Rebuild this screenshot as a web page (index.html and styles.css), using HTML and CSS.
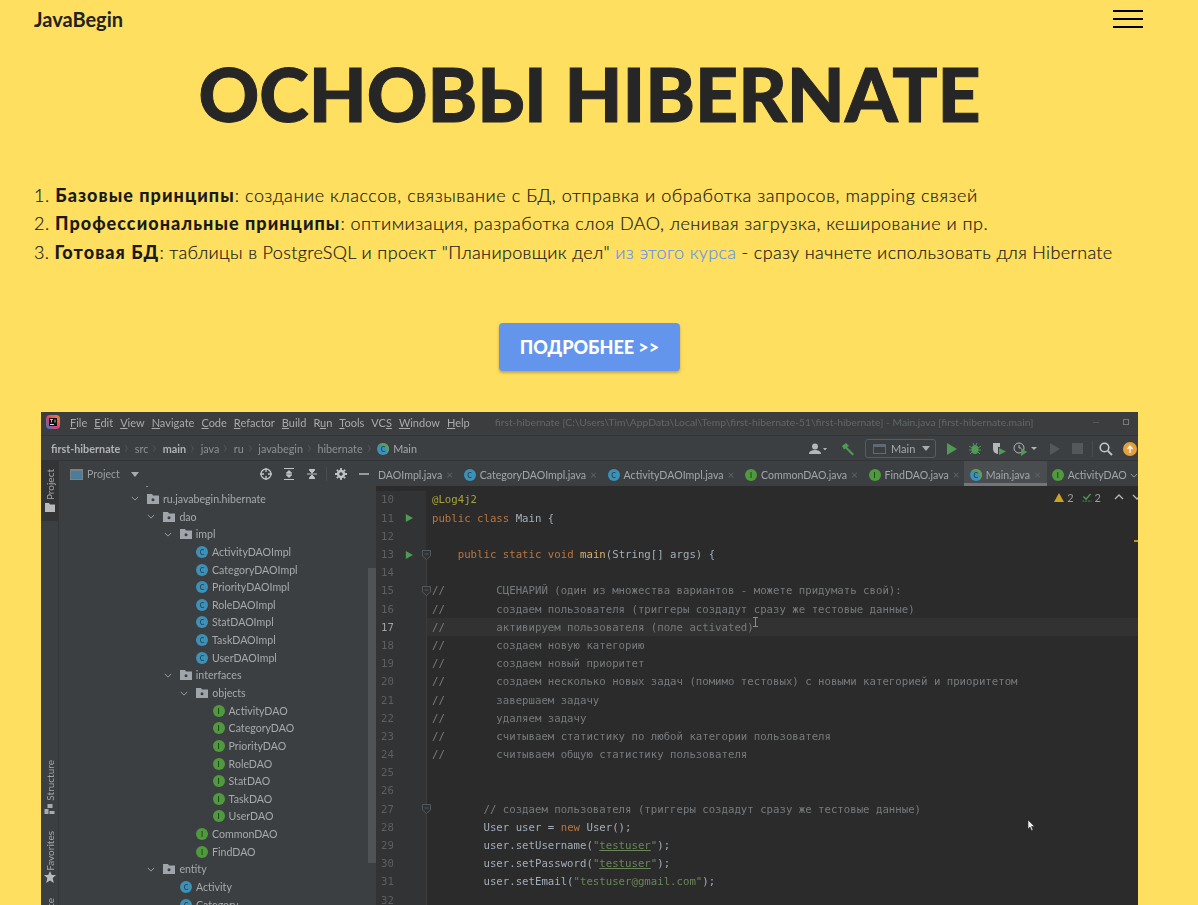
FILE: index.html
```html
<!DOCTYPE html>
<html lang="ru">
<head>
<meta charset="utf-8">
<title>Основы Hibernate</title>
<link rel="stylesheet" href="styles.css">
</head>
<body>
<svg class="defs" width="0" height="0" aria-hidden="true">
  <defs><linearGradient id="ij" x1="0" y1="1" x2="1" y2="0"><stop offset="0" stop-color="#2f7fd0"/><stop offset=".45" stop-color="#d9416b"/><stop offset="1" stop-color="#ee8a3a"/></linearGradient></defs>
  <symbol id="folder" viewBox="0 0 12 10"><path d="M0 0h5l1 1.500h6V10H0z" fill="#a0a5ab"/><circle cx="6" cy="5.800" r="1.500" fill="#3c3f41"/></symbol>
  <symbol id="chev" viewBox="0 0 10 6"><path d="M1 1l4 4 4-4" fill="none" stroke="#a0a3a6" stroke-width="1.200"/></symbol>
  <symbol id="tri" viewBox="0 0 10 10"><path d="M1 0l9 5-9 5z" fill="#4f9a55"/></symbol>
  <symbol id="foldm" viewBox="0 0 9 10"><path d="M.5.500h8v5.500l-4 3.500-4-3.500z" fill="#2f3132" stroke="#55585a"/><path d="M2.500 4h4" stroke="#55585a"/></symbol>
</svg>
<div class="page">
  <header class="topbar">
    <a class="logo">JavaBegin</a>
    <div class="burger"><span></span><span></span><span></span></div>
  </header>
  <h1 class="title">ОСНОВЫ HIBERNATE</h1>
  <div class="intro">
    <p class="l1">1. <b>Базовые принципы</b>: создание классов, связывание с БД, отправка и обработка запросов, mapping связей</p>
    <p class="l2">2. <b>Профессиональные принципы</b>: оптимизация, разработка слоя DAO, ленивая загрузка, кеширование и пр.</p>
    <p class="l3">3. <b>Готовая БД</b>: таблицы в PostgreSQL и проект "Планировщик дел" <a class="link">из этого курса</a> - сразу начнете использовать для Hibernate</p>
  </div>
  <div class="cta"><a class="btn">ПОДРОБНЕЕ &gt;&gt;</a></div>

  <div class="ide">
    <div class="menubar">
      <svg class="appicon" viewBox="0 0 14 14"><rect width="14" height="14" rx="4" fill="url(#ij)"/><rect x="3" y="3" width="8" height="8" fill="#111"/><rect x="4" y="9" width="4" height="1" fill="#ddd"/><path d="M4 4.500h3M5.500 4.500v3M9 4.500v3" stroke="#ddd" stroke-width=".8"/></svg>
      <nav class="menu">
        <span><u>F</u>ile</span><span><u>E</u>dit</span><span><u>V</u>iew</span><span><u>N</u>avigate</span><span><u>C</u>ode</span><span><u>R</u>efactor</span><span><u>B</u>uild</span><span>R<u>u</u>n</span><span><u>T</u>ools</span><span>VC<u>S</u></span><span><u>W</u>indow</span><span><u>H</u>elp</span>
      </nav>
      <span class="wintitle">first-hibernate [C:\Users\Tim\AppData\Local\Temp\first-hibernate-51\first-hibernate] - Main.java [first-hibernate.main]</span>
      <span class="winctl"><i class="min"></i><i class="rest"></i></span>
    </div>
    <div class="navbar">
      <div class="crumbs">
        <b>first-hibernate</b><em></em><span>src</span><em></em><b>main</b><em></em><span>java</span><em></em><span>ru</span><em></em><span>javabegin</span><em></em><span>hibernate</span><em></em>
        <span class="cicon cicon-main">C</span><span class="crumb-main">Main</span>
      </div>
      <div class="tools">
        <svg class="t-user" viewBox="0 0 18 12"><circle cx="6" cy="3.500" r="3" fill="#b4b6b8"/><path d="M0 11c0-3 3-4 6-4s6 1 6 4z" fill="#b4b6b8"/><path d="M14 5h4l-2 2.500z" fill="#b4b6b8"/></svg>
        <svg class="t-ham" viewBox="0 0 14 14"><path d="M1 4l4-3 3 3-2 1 7 7-1.500 1.500-7-7-1.500 1z" fill="#4f9a55"/></svg>
        <div class="runcfg"><i></i><span>Main</span><svg viewBox="0 0 8 5"><path d="M0 0h8L4 5z" fill="#aaa"/></svg></div>
        <svg class="t-play" viewBox="0 0 10 12"><path d="M0 0l10 6-10 6z" fill="#4f9a55"/></svg>
        <svg class="t-bug" viewBox="0 0 12 13"><ellipse cx="6" cy="7.500" rx="3.500" ry="4.500" fill="#4f9a55"/><path d="M0 4l3 2M12 4L9 6M0 8h3M12 8H9M1 12l2-2M11 12l-2-2M4 1l1 2M8 1L7 3" stroke="#4f9a55"/></svg>
        <svg class="t-cov" viewBox="0 0 14 13"><path d="M1 1h5v11a5 5 0 0 1-5-5z" fill="#b4b6b8"/><path d="M6 1h2v4H6z" fill="#b4b6b8"/><path d="M7 6l7 3.500L7 13z" fill="#4f9a55"/></svg>
        <svg class="t-prof" viewBox="0 0 24 14"><circle cx="6" cy="6" r="5" fill="none" stroke="#b4b6b8"/><path d="M6 3v3h2" fill="none" stroke="#b4b6b8"/><path d="M8 6l6 4-6 4z" fill="#4f9a55"/><path d="M18 5h6l-3 3z" fill="#b4b6b8"/></svg>
        <svg class="t-dim" viewBox="0 0 10 12"><path d="M0 0l10 6-10 6z" fill="#55585a"/></svg>
        <i class="t-stop"></i>
        <i class="t-sep"></i>
        <svg class="t-search" viewBox="0 0 14 14"><circle cx="5.500" cy="5.500" r="4.300" fill="none" stroke="#c4c6c8" stroke-width="1.600"/><path d="M8.800 8.800L13 13" stroke="#c4c6c8" stroke-width="1.800"/></svg>
        <svg class="t-upd" viewBox="0 0 14 14"><circle cx="7" cy="7" r="7" fill="#e5a03c"/><path d="M7 11V5M4.500 7L7 4l2.500 3" stroke="#fff" stroke-width="1.300" fill="none"/></svg>
      </div>
    </div>
    <div class="workspace">
      <aside class="strip">
        <div class="strip-active"><span class="vtext">Project</span><svg viewBox="0 0 10 9"><path d="M0 0h4l1 1.500h5V9H0z" fill="#b8babc"/></svg></div>
        <span class="vtext v-structure">Structure</span>
        <svg class="s-struct" viewBox="0 0 10 10"><path d="M0 5h4v5H0zM5 7h5v3H5zM3 0h5v4H3z" fill="#a8aaac"/></svg>
        <span class="vtext v-fav">Favorites</span>
        <svg class="s-star" viewBox="0 0 12 12"><path d="M6 0l1.800 4H12L8.700 7l1.100 5L6 9.400 2.200 12l1.100-5L0 4h4.200z" fill="#b8babc"/></svg>
        <span class="vtext v-web">Persistence</span>
      </aside>
      <section class="project">
        <div class="panelhead">
          <i class="winico"></i><span>Project</span><svg class="drop" viewBox="0 0 8 5"><path d="M0 0h8L4 5z" fill="#aaa"/></svg>
          <div class="panelbtns">
            <svg viewBox="0 0 12 12"><circle cx="6" cy="6" r="5" fill="none" stroke="#c0c2c4" stroke-width="1.300"/><path d="M6 0v4M6 8v4M0 6h4M8 6h4" stroke="#c0c2c4" stroke-width="1.300"/></svg>
            <svg viewBox="0 0 12 12"><path d="M1 .500h10M1 11.500h10M3 6h6M6 2.500L3.500 5h5zM6 9.500L3.500 7h5z" stroke="#c0c2c4" fill="#c0c2c4"/></svg>
            <svg viewBox="0 0 12 12"><path d="M1 6h10M3 1.500h6M3 10.500h6M6 5L3.500 2.500h5zM6 7L3.500 9.500h5z" stroke="#c0c2c4" fill="#c0c2c4"/></svg>
            <i class="pb-sep"></i>
            <svg viewBox="0 0 12 12"><circle cx="6" cy="6" r="3" fill="none" stroke="#c0c2c4" stroke-width="2.400"/><path d="M6 0v2M6 10v2M0 6h2M10 6h2M1.800 1.800l1.400 1.400M8.800 8.800l1.400 1.400M1.800 10.200l1.400-1.400M8.800 3.200l1.400-1.400" stroke="#c0c2c4" stroke-width="1.800"/></svg>
            <svg viewBox="0 0 12 12"><path d="M1 6h10" stroke="#c0c2c4" stroke-width="1.400"/></svg>
          </div>
        </div>
        <ul class="tree">
          <li class="lv-1"><svg class="chev"><use href="#chev"/></svg><svg class="fold"><use href="#folder"/></svg>java</li>
          <li class="lv0"><svg class="chev"><use href="#chev"/></svg><svg class="fold"><use href="#folder"/></svg>ru.javabegin.hibernate</li>
          <li class="lv1"><svg class="chev"><use href="#chev"/></svg><svg class="fold"><use href="#folder"/></svg>dao</li>
          <li class="lv2"><svg class="chev"><use href="#chev"/></svg><svg class="fold"><use href="#folder"/></svg>impl</li>
          <li class="lv3"><span class="cicon">C</span>ActivityDAOImpl</li>
          <li class="lv3"><span class="cicon">C</span>CategoryDAOImpl</li>
          <li class="lv3"><span class="cicon">C</span>PriorityDAOImpl</li>
          <li class="lv3"><span class="cicon">C</span>RoleDAOImpl</li>
          <li class="lv3"><span class="cicon">C</span>StatDAOImpl</li>
          <li class="lv3"><span class="cicon">C</span>TaskDAOImpl</li>
          <li class="lv3"><span class="cicon">C</span>UserDAOImpl</li>
          <li class="lv2"><svg class="chev"><use href="#chev"/></svg><svg class="fold"><use href="#folder"/></svg>interfaces</li>
          <li class="lv3"><svg class="chev"><use href="#chev"/></svg><svg class="fold"><use href="#folder"/></svg>objects</li>
          <li class="lv4"><span class="iicon">I</span>ActivityDAO</li>
          <li class="lv4"><span class="iicon">I</span>CategoryDAO</li>
          <li class="lv4"><span class="iicon">I</span>PriorityDAO</li>
          <li class="lv4"><span class="iicon">I</span>RoleDAO</li>
          <li class="lv4"><span class="iicon">I</span>StatDAO</li>
          <li class="lv4"><span class="iicon">I</span>TaskDAO</li>
          <li class="lv4"><span class="iicon">I</span>UserDAO</li>
          <li class="lv3"><span class="iicon">I</span>CommonDAO</li>
          <li class="lv3"><span class="iicon">I</span>FindDAO</li>
          <li class="lv1"><svg class="chev"><use href="#chev"/></svg><svg class="fold"><use href="#folder"/></svg>entity</li>
          <li class="lv2"><span class="cicon">C</span>Activity</li>
          <li class="lv2"><span class="cicon">C</span>Category</li>
        </ul>
        <div class="vscroll"></div>
      </section>
      <section class="editor">
        <div class="tabs">
          <div class="tab tab-cut"><span>DAOImpl.java</span><i>×</i></div>
          <div class="tab"><span class="cicon">C</span><span>CategoryDAOImpl.java</span><i>×</i></div>
          <div class="tab"><span class="cicon">C</span><span>ActivityDAOImpl.java</span><i>×</i></div>
          <div class="tab"><span class="iicon">I</span><span>CommonDAO.java</span><i>×</i></div>
          <div class="tab"><span class="iicon">I</span><span>FindDAO.java</span><i>×</i></div>
          <div class="tab tab-on"><span class="cicon cicon-main">C</span><span>Main.java</span><i>×</i></div>
          <div class="tab tab-last"><span class="iicon">I</span><span>ActivityDAO</span></div>
          <svg class="tabs-more"><use href="#chev"/></svg>
        </div>
        <div class="code">
          <div class="ln"><span class="no">10</span><code class="ann">@Log4j2</code></div>
          <div class="ln"><span class="no">11<svg class="runm"><use href="#tri"/></svg></span><code><span class="kw">public class</span> Main {</code></div>
          <div class="ln"><span class="no">12</span><code></code></div>
          <div class="ln"><span class="no">13<svg class="runm"><use href="#tri"/></svg></span><code>    <span class="kw">public static void</span> <span class="fn">main</span>(String[] args) {</code></div>
          <div class="ln"><span class="no">14</span><code></code></div>
          <div class="ln"><span class="no">15</span><code class="cm">//        СЦЕНАРИЙ (один из множества вариантов - можете придумать свой):</code></div>
          <div class="ln"><span class="no">16</span><code class="cm">//        создаем пользователя (триггеры создадут сразу же тестовые данные)</code></div>
          <div class="ln ln-on"><span class="no">17</span><code class="cm">//        активируем пользователя (поле activated)</code></div>
          <div class="ln"><span class="no">18</span><code class="cm">//        создаем новую категорию</code></div>
          <div class="ln"><span class="no">19</span><code class="cm">//        создаем новый приоритет</code></div>
          <div class="ln"><span class="no">20</span><code class="cm">//        создаем несколько новых задач (помимо тестовых) с новыми категорией и приоритетом</code></div>
          <div class="ln"><span class="no">21</span><code class="cm">//        завершаем задачу</code></div>
          <div class="ln"><span class="no">22</span><code class="cm">//        удаляем задачу</code></div>
          <div class="ln"><span class="no">23</span><code class="cm">//        считываем статистику по любой категории пользователя</code></div>
          <div class="ln"><span class="no">24</span><code class="cm">//        считываем общую статистику пользователя</code></div>
          <div class="ln"><span class="no">25</span><code></code></div>
          <div class="ln"><span class="no">26</span><code></code></div>
          <div class="ln"><span class="no">27</span><code class="cm">        // создаем пользователя (триггеры создадут сразу же тестовые данные)</code></div>
          <div class="ln"><span class="no">28</span><code>        User user = <span class="kw">new</span> User();</code></div>
          <div class="ln"><span class="no">29</span><code>        user.setUsername(<span class="str">"<u>testuser</u>"</span>);</code></div>
          <div class="ln"><span class="no">30</span><code>        user.setPassword(<span class="str">"<u>testuser</u>"</span>);</code></div>
          <div class="ln"><span class="no">31</span><code>        user.setEmail(<span class="str">"testuser@gmail.com"</span>);</code></div>
          <div class="ln"><span class="no">32</span><code></code></div>
        </div>
        <div class="inspect">
          <svg viewBox="0 0 10 9"><path d="M5 0l5 9H0z" fill="#c9a227"/></svg><span>2</span>
          <svg viewBox="0 0 10 10"><path d="M1 4l3 3 5-6" fill="none" stroke="#4f9a55" stroke-width="1.600"/><path d="M0 9h10" stroke="#4f9a55" stroke-dasharray="2 1"/></svg><span>2</span>
          <svg class="arr" viewBox="0 0 10 6"><path d="M1 5l4-4 4 4" fill="none" stroke="#b4b6b8" stroke-width="1.300"/></svg>
          <svg class="arr" viewBox="0 0 10 6"><path d="M1 1l4 4 4-4" fill="none" stroke="#b4b6b8" stroke-width="1.300"/></svg>
        </div>
        <i class="errmark"></i>
        <i class="foldline"></i>
        <svg class="foldmark fm1"><use href="#foldm"/></svg><svg class="foldmark fm2"><use href="#foldm"/></svg><svg class="foldmark fm3"><use href="#foldm"/></svg>
        <svg class="ibeam" viewBox="0 0 5 10"><path d="M0 .500h5M0 9.500h5M2.500 0v10" stroke="#8a8a8a"/></svg>
        <svg class="pointer" viewBox="0 0 7 11"><path d="M0 0v9l2-2 1.500 3.500 1.500-.600L3.500 6.500H6.500z" fill="#eee" stroke="#222" stroke-width=".500"/></svg>
      </section>
    </div>
  </div>
</div>
</body>
</html>
```
FILE: styles.css
```css
* { box-sizing: border-box; }
html, body { margin: 0; padding: 0; height: 905px; overflow: hidden; background: #ffdf5f; }
body { font-family: "Lato", "Open Sans", sans-serif; color: #242424; }
.defs { position: absolute; }
.page { width: 1179px; }

.topbar { height: 38px; padding: 0 36px 0 34px; display: flex; align-items: center; justify-content: space-between; }
.logo { font-size: 20px; font-weight: 700; color: #222; }
.burger { width: 30px; height: 18px; display: flex; flex-direction: column; justify-content: space-between; }
.burger span { display: block; height: 2px; background: #000; }

.title { margin: 0; height: 110px; line-height: 110px; text-align: center; font-size: 75px; font-weight: 900; color: #262626; white-space: nowrap; -webkit-text-stroke: 1px #262626; }

.intro { margin-top: 32.500px; padding-left: 34px; font-size: 18px; line-height: 28.800px; font-weight: 300; white-space: nowrap; color: #1a1a1a; -webkit-text-stroke: .2px #1a1a1a; }
.intro p { margin: 0; }
.intro b { font-weight: 900; letter-spacing: 1.050px; -webkit-text-stroke: 0; }
.l1 { letter-spacing: .560px; }
.l2 { letter-spacing: .480px; }
.l3 { letter-spacing: .350px; }
.link { color: #6495ed; -webkit-text-stroke: .2px #6495ed; }

.cta { margin-top: 56px; display: flex; justify-content: center; }
.btn { width: 181px; height: 48px; display: flex; align-items: center; justify-content: center; background: #6495ed; border-radius: 4px; box-shadow: 0 2px 3px rgba(0, 0, 0, .25); color: #fff; font-size: 18px; font-weight: 900; }

/* IDE picture */
.ide { margin: 41px 0 0 41px; width: 1097px; height: 493px; overflow: hidden; background: #3c3f41; color: #a5a8aa; font-family: "Lato", "Open Sans", sans-serif; font-size: 11px; display: flex; flex-direction: column; filter: blur(.4px); }

.menubar { height: 24px; flex: none; display: flex; align-items: center; padding: 0 0 2px 5px; background: #3b3d3f; border-bottom: 1px solid #323436; }
.appicon { width: 14px; height: 14px; flex: none; }
.menu { display: flex; gap: 7px; margin-left: 10px; color: #a8aaac; font-size: 11px; }
.wintitle { margin-left: 25px; color: #62666a; font-size: 10.350px; white-space: nowrap; }
.winctl { margin-left: auto; display: flex; align-items: center; gap: 24px; padding-right: 9px; }
.winctl i { display: block; }
.min { width: 6px; height: 1px; background: #55585a; }
.rest { width: 6px; height: 6px; border: 1px solid #77797b; }

.navbar { height: 25px; flex: none; display: flex; align-items: center; justify-content: space-between; padding: 2px 0 0 10px; background: #3c3f41; border-bottom: 1px solid #323436; }
.crumbs { display: flex; align-items: center; white-space: nowrap; color: #8d9093; font-size: 10.800px; }
.crumbs b { color: #b0b2b4; font-weight: 700; }
.crumbs em { width: 5px; height: 5px; margin: 0 6.500px 0 3px; border-top: 1px solid #55585a; border-right: 1px solid #55585a; transform: scaleX(.6) rotate(45deg); }
.crumb-main { color: #a5a8aa; }

.cicon, .iicon { width: 12px; height: 12px; flex: none; border-radius: 50%; display: inline-flex; align-items: center; justify-content: center; font-size: 7px; font-weight: 700; color: #2f4a58; margin-right: 4px; }
.cicon { background: #3b91b8; }
.iicon { background: #4f9a3c; color: #24421c; }
.cicon-main { box-shadow: inset -2px 2px 0 #5fa052; }

.tools { display: flex; align-items: center; height: 100%; }
.tools svg { display: block; flex: none; }
.t-user { width: 18px; height: 12px; }
.t-ham { width: 14px; height: 14px; margin-left: 14px; }
.runcfg { width: 71px; height: 19px; margin-left: 10px; border: 1px solid #5a5d5f; border-radius: 3px; display: flex; align-items: center; padding: 0 5px 0 7px; font-size: 11px; color: #a5a8aa; }
.runcfg i { width: 13px; height: 10px; border: 1px solid #5f6a75; border-top-width: 3px; margin-right: 5px; }
.runcfg svg { width: 8px; height: 5px; margin-left: auto; }
.t-play { width: 10px; height: 12px; margin-left: 11px; }
.t-bug { width: 12px; height: 13px; margin-left: 12px; }
.t-cov { width: 14px; height: 13px; margin-left: 11px; }
.t-prof { width: 24px; height: 14px; margin-left: 7px; }
.t-dim { width: 10px; height: 12px; margin-left: 13px; }
.t-stop { width: 11px; height: 11px; margin-left: 12px; background: #55585a; }
.t-sep { width: 1px; height: 16px; margin-left: 9px; background: #4a4d4f; }
.t-search { width: 14px; height: 14px; margin-left: 6px; }
.t-upd { width: 14px; height: 14px; margin-left: 10px; margin-right: 1px; }

.workspace { flex: 1; min-height: 0; display: flex; }

.strip { width: 18px; flex: none; display: flex; flex-direction: column; align-items: center; overflow: hidden; background: #3c3f41; border-right: 1px solid #333537; color: #a5a8aa; font-size: 10px; }
.vtext { writing-mode: vertical-rl; transform: rotate(180deg); line-height: 18px; white-space: nowrap; flex: none; }
.strip-active { width: 100%; height: 60px; flex: none; display: flex; flex-direction: column; align-items: center; padding-top: 8px; background: #323436; }
.strip-active svg { width: 10px; height: 9px; margin-top: 3px; }
.v-structure { margin-top: 239px; }
.s-struct { width: 11px; height: 10px; flex: none; margin-top: 3px; }
.v-fav { margin-top: 17px; }
.s-star { width: 12px; height: 12px; flex: none; margin-top: 1px; }
.v-web { margin-top: 15px; }

.project { width: 317px; flex: none; position: relative; overflow: hidden; background: #3c3f41; display: flex; flex-direction: column; }
.panelhead { height: 25px; flex: none; display: flex; align-items: center; padding: 2px 0 0 11px; background: #3c3f41; position: relative; z-index: 1; font-size: 10.600px; color: #9a9c9f; }
.winico { width: 13px; height: 11px; margin-right: 4px; border: 1px solid #7b8084; border-top-width: 2px; background: #4a7c9c; }
.drop { width: 8px; height: 5px; margin-left: 11px; }
.panelbtns { margin-left: auto; display: flex; align-items: center; gap: 11px; padding-right: 6px; }
.panelbtns svg { width: 12px; height: 12px; display: block; }
.pb-sep { width: 1px; height: 14px; margin: 0 -3px; background: #4a4d4f; }

.tree { margin: -13.400px 0 0; padding: 0; list-style: none; color: #a7aaac; font-size: 10.600px; }
.tree li { height: 17.650px; display: flex; align-items: center; white-space: nowrap; }
.chev { width: 8px; height: 5px; margin-right: 8px; flex: none; }
.fold { width: 12px; height: 10px; margin-right: 4px; flex: none; }
.lv-1 { padding-left: 55.600px; }
.lv0 { padding-left: 72px; }
.lv1 { padding-left: 88.400px; }
.lv2 { padding-left: 104.800px; }
.lv3 { padding-left: 121.200px; }
.lv4 { padding-left: 137.600px; }
.lv2:has(> .cicon) { padding-left: 121px; }
.lv3:has(> .cicon), .lv3:has(> .iicon) { padding-left: 137px; }
.lv4:has(> .iicon) { padding-left: 153.600px; }
.vscroll { position: absolute; left: 309px; top: 107px; width: 8px; height: 295px; background: #505355; }

.editor { flex: 1; min-width: 0; position: relative; overflow: hidden; background: #2b2b2b; display: flex; flex-direction: column; }
.tabs { height: 25px; flex: none; display: flex; align-items: center; background: #3c3f41; white-space: nowrap; overflow: hidden; position: relative; font-size: 10.600px; color: #a3a6a8; }
.tab { height: 100%; flex: none; display: flex; align-items: center; padding: 3px 0 0 10.500px; }
.tab i { width: 7px; font-style: normal; margin-left: 4px; color: #5f6265; font-size: 12px; }
.tab-cut { padding-left: 2px; }
.tab-on { width: 83px; margin-left: 4px; padding: 3px 0 0 6px; background: #4a4d50; box-shadow: inset 0 -3px 0 #72767a; }
.tab-last { padding-left: 5px; }
.tabs-more { position: absolute; right: 0; top: 12px; width: 8px; height: 5px; }

.code { padding-top: 5px; font-family: "DejaVu Sans Mono", "Liberation Mono", monospace; font-size: 10.700px; color: #a3adb8; }
.ln { height: 18.200px; display: flex; align-items: center; white-space: pre; }
.no { width: 56px; height: 100%; flex: none; display: flex; align-items: center; padding-left: 5px; background: #313335; color: #5c6063; position: relative; border-right: 6px solid #2b2b2b; }
.ln code { font: inherit; }
.runm { width: 8px; height: 8px; margin-left: 11px; }
.ln-on { background: #323232; }
.ln-on .no { color: #a0a2a4; border-right-color: #323232; }
.ann { color: #a8a23c; }
.kw { color: #b8763f; }
.fn { color: #d6ad6e; }
.str { color: #6a8759; }
.cm { color: #777a7c; }

.inspect { position: absolute; right: -4px; top: 30px; display: flex; align-items: center; gap: 3px; font-size: 11px; color: #9a9c9e; }
.inspect svg { width: 10px; height: 9px; display: block; }
.inspect span { margin-right: 5px; }
.inspect .arr { margin-left: 5px; height: 6px; }
.errmark { position: absolute; right: 0; top: 79px; width: 4px; height: 2px; background: #b89a2c; }
.foldline { position: absolute; left: 50px; top: 92px; width: 1px; height: 400px; background: #3a3c3d; }
.foldmark { position: absolute; left: 46px; width: 9px; height: 10px; }
.fm1 { top: 89px; }
.fm2 { top: 125px; }
.fm3 { top: 343px; }
.ibeam { position: absolute; left: 377px; top: 156px; width: 5px; height: 10px; }
.pointer { position: absolute; left: 652px; top: 359px; width: 7px; height: 11px; }
```
